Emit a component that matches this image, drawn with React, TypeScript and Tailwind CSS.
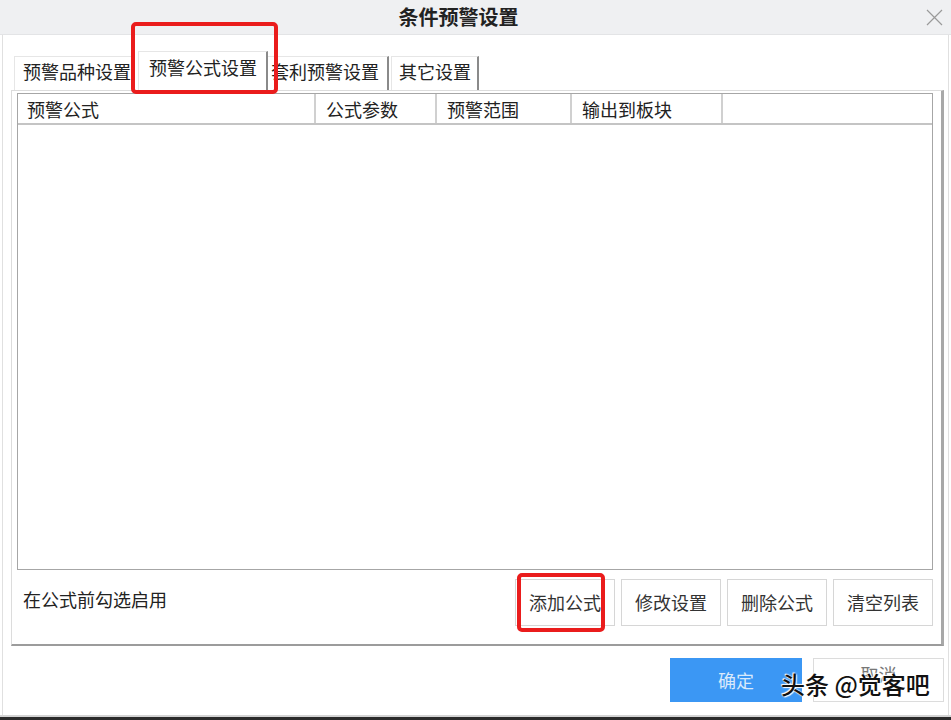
import React from "react";

const font = { fontFamily: '"Noto Sans CJK SC", "Noto Sans", sans-serif' };

function Btn({ label }: { label: string }) {
  return (
    <div className="w-[100px] h-[47px] border border-[#d6d6d6] bg-white flex items-center justify-center text-[18px] text-[#333]">
      {label}
    </div>
  );
}

export default function App() {
  return (
    <div
      className="w-[951px] h-[720px] bg-white flex flex-col relative overflow-hidden"
      style={font}
    >
      {/* title bar */}
      <div className="h-[35px] shrink-0 bg-[#eff0f2] border-b border-[#e3e4e6] flex items-center justify-center pr-[34px] relative">
        <span className="text-[20px] font-bold text-[#222] leading-none">条件预警设置</span>
        <svg
          className="absolute right-[8px] top-[9px]"
          width="17"
          height="17"
          viewBox="0 0 17 17"
        >
          <path d="M1 1 L16 16 M16 1 L1 16" stroke="#9a9a9a" strokeWidth="1.2" fill="none" />
        </svg>
      </div>

      {/* body */}
      <div className="flex-1 flex flex-col ml-[2px] mr-[2px] border-l border-r border-[#e0e0e0] pl-[8px] pr-[4px]">
        {/* tabs */}
        <div className="h-[55px] shrink-0 flex items-end pl-[3px] text-[18px] text-[#222]">
          <div className="w-[120px] h-[34px] border-l border-t border-[#e6e6e6] border-r-2 border-r-[#9a9a9a] flex items-center pl-[8px] pb-[6px] leading-none">
            预警品种设置
          </div>
          <div className="ml-[4px] w-[130px] h-[39px] bg-white border-l border-t border-[#e6e6e6] border-r-2 border-r-[#8a8a8a] flex items-center pl-[10px] pb-[9px] leading-none relative z-10">
            预警公式设置
          </div>
          <div className="w-[121px] h-[34px] border-t border-[#e6e6e6] border-r-2 border-r-[#8a8a8a] flex items-center pl-[3px] pb-[6px] leading-none">
            套利预警设置
          </div>
          <div className="ml-[2px] w-[88px] h-[34px] border-l border-t border-[#e6e6e6] border-r-2 border-r-[#8a8a8a] flex items-center pl-[7px] pb-[6px] leading-none">
            其它设置
          </div>
        </div>

        {/* panel */}
        <div className="h-[556px] shrink-0 border-t border-l border-[#dcdcdc] border-r-[3px] border-r-[#a8a8a8] border-b-[2px] border-b-[#9c9c9c] pl-[5px] pr-[8px] pt-[2px] flex flex-col">
          {/* list */}
          <div className="h-[477px] shrink-0 border border-[#a6a6a6] bg-white flex flex-col">
            <div className="h-[31px] border-b-2 border-[#c4c4c4] flex text-[18px] text-[#222] leading-none">
              <div className="w-[298px] flex items-center pl-[9px] border-r-2 border-[#d0d0d0]">预警公式</div>
              <div className="w-[121px] flex items-center pl-[10px] border-r-2 border-[#d0d0d0]">公式参数</div>
              <div className="w-[135px] flex items-center pl-[10px] border-r-2 border-[#d0d0d0]">预警范围</div>
              <div className="w-[151px] flex items-center pl-[10px] border-r-2 border-[#d0d0d0]">输出到板块</div>
              <div className="flex-1" />
            </div>
          </div>
          {/* bottom row */}
          <div className="flex-1 flex items-start pt-[9px]">
            <div className="text-[18px] text-[#222] pl-[6px] pt-[11px] leading-none">在公式前勾选启用</div>
            <div className="ml-auto flex gap-[6px]">
              <Btn label="添加公式" />
              <Btn label="修改设置" />
              <Btn label="删除公式" />
              <Btn label="清空列表" />
            </div>
          </div>
        </div>

        {/* footer */}
        <div className="flex-1 flex justify-end items-start pt-[12px] gap-[11px]">
          <div className="w-[132px] h-[44px] bg-[#3b97f4] flex items-center justify-center text-[18px] text-[#d8e9fb]">
            确定
          </div>
          <div className="w-[131px] h-[44px] border border-[#dcdcdc] bg-white flex items-start justify-center pt-[6px] text-[18px] leading-none text-[#777]">
            取消
          </div>
        </div>
      </div>

      {/* bottom edge */}
      <div className="h-[2px] shrink-0 bg-[#d4d4d4]" />
      <div className="h-[3px] shrink-0 bg-[#2b2b2b]" />

      {/* red highlight boxes */}
      <div className="absolute left-[131px] top-[22px] w-[147px] h-[72px] border-[4px] border-[#ea1c1c] rounded-[5px] z-20" />
      <div className="absolute left-[517px] top-[573px] w-[88px] h-[59px] border-[4px] border-[#ea1c1c] rounded-[5px] z-20" />

      {/* watermark */}
      <div className="absolute left-[781px] top-[672px] text-[24px] font-medium text-[#111] leading-none whitespace-nowrap z-30 [text-shadow:0_0_2px_#fff,1px_1px_1px_#fff,-1px_-1px_1px_#fff]">
        头条 @觉客吧
      </div>
    </div>
  );
}
